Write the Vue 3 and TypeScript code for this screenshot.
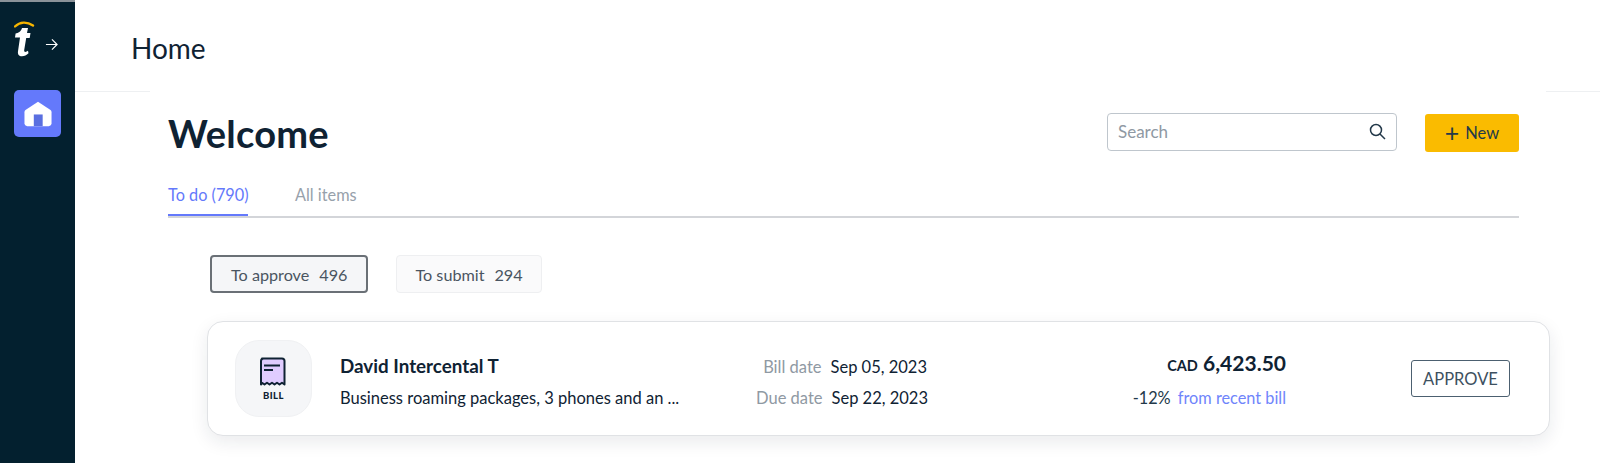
<template>
  <div class="page">
    <aside class="sidebar">
      <div class="brand">
        <svg class="logo" width="26" height="42" viewBox="0 0 26 42">
          <path d="M1 6.500C6 1.500 13 1.500 19 5.500" fill="none" stroke="#f7b500" stroke-width="2.400" stroke-linecap="round" />
          <path d="M8 8h6l-1 5h3.500l-.8 5h-3.500l-2 12c-.3 2 1 2.500 2.500 1.500l1.300-.8.5 2.500c-2 2-4 3-6.500 3-3 0-4.500-2-4-5l2-13.700H1l.6-4c2.400-.5 5.500-2 6.400-5.500z" fill="#fff" />
        </svg>
        <svg class="arrow" width="13" height="13" viewBox="0 0 14 14">
          <path d="M1 7h12M7.500 1.500 13 7l-5.500 5.500" fill="none" stroke="#fff" stroke-width="1.300" />
        </svg>
      </div>
      <div class="home-tile">
        <svg width="28" height="26" viewBox="0 0 30 26">
          <path d="M15 0 2 8.500C1 9.200.5 10 .5 11.200V23c0 1.700 1.300 3 3 3h23c1.700 0 3-1.300 3-3V11.200c0-1.200-.5-2-1.500-2.700z" fill="#fff" />
          <rect x="10.500" y="13.500" width="9.500" height="12.500" fill="#5a6fe0" />
        </svg>
      </div>
    </aside>

    <main class="main">
      <header class="topbar">Home</header>
      <section class="panel">
        <div class="title-row">
          <h1>Welcome</h1>
          <div class="actions">
            <label class="search">
              <input type="text" placeholder="Search" />
              <svg width="17" height="17" viewBox="0 0 17 17">
                <circle cx="7" cy="7" r="5.500" fill="none" stroke="#23394a" stroke-width="1.500" />
                <path d="m11 11 5 5" stroke="#23394a" stroke-width="1.500" />
              </svg>
            </label>
            <button class="new-btn" type="button"><span class="plus">+</span>New</button>
          </div>
        </div>

        <nav class="tabs">
          <a class="tab active">To do (790)</a>
          <a class="tab">All items</a>
        </nav>

        <div class="filters">
          <button class="chip selected" type="button">To approve<span>496</span></button>
          <button class="chip" type="button">To submit<span>294</span></button>
        </div>

        <article class="bill">
          <div class="bill-icon">
            <svg width="28" height="30" viewBox="0 0 28 30">
              <path d="M4 1.500h20c1.400 0 2.500 1.100 2.500 2.500v23.500l-2.500-1.800-2.500 1.800-2.500-1.800-2.500 1.800-2.500-1.800-2.500 1.800-2.500-1.800-2.500 1.800-2.500-1.800-1 1.800V4c0-1.400 1.100-2.500 2.500-2.500z" fill="#e0ccff" stroke="#0f2233" stroke-width="2" stroke-linejoin="round" />
              <path d="M6 8.500h16M6 13h9" stroke="#0f2233" stroke-width="2" />
            </svg>
            <span>BILL</span>
          </div>
          <div class="bill-text">
            <div class="vendor">David Intercental T</div>
            <div class="desc">Business roaming packages, 3 phones and an ...</div>
          </div>
          <div class="dates">
            <div class="date-row"><span class="date-label">Bill date</span><span>Sep 05, 2023</span></div>
            <div class="date-row"><span class="date-label">Due date</span><span>Sep 22, 2023</span></div>
          </div>
          <div class="amount">
            <div class="total"><small>CAD</small> 6,423.50</div>
            <div class="delta">-12% <a>from recent bill</a></div>
          </div>
          <button class="approve" type="button">APPROVE</button>
        </article>
      </section>
    </main>
  </div>
</template>

<script setup lang="ts">
</script>

<style>
html,
body {
  margin: 0;
  background: #fff;
  overflow: hidden;
}
</style>

<style scoped>
.page {
  display: flex;
  height: 463px;
  font-family: Lato, "Open Sans", sans-serif;
  color: #0f2233;
}

.sidebar {
  width: 75px;
  flex-shrink: 0;
  background: #03202f;
  border-top: 2px solid #8a9299;
  box-sizing: border-box;
  padding: 18px 14px 0;
}

.brand {
  display: flex;
  align-items: center;
  gap: 5px;
  height: 42px;
}

.arrow {
  margin-top: 6px;
}

.home-tile {
  width: 47px;
  height: 47px;
  margin-top: 28px;
  background: #6479fb;
  border-radius: 5px;
  display: flex;
  align-items: center;
  justify-content: center;
}

.main {
  flex: 1;
  min-width: 0;
}

.topbar {
  height: 92px;
  box-sizing: border-box;
  border-bottom: 1px solid #eef0f2;
  padding: 31px 0 0 56px;
  font-size: 28px;
  line-height: 35px;
}

.panel {
  margin: -1px 54px 0 75px;
  padding: 2px 0 0;
  background: #fff;
  position: relative;
}

.title-row {
  display: flex;
  justify-content: space-between;
  align-items: center;
  margin: 0 27px 0 18px;
  height: 80px;
}

h1 {
  margin: 0;
  font-size: 38px;
  font-weight: 700;
  letter-spacing: 0.2px;
}

.actions {
  display: flex;
  align-items: center;
  gap: 28px;
}

.search {
  display: flex;
  align-items: center;
  width: 290px;
  height: 38px;
  margin-bottom: 3px;
  box-sizing: border-box;
  border: 1px solid #bfc6cd;
  border-radius: 4px;
  padding: 0 10px;
}

.search input {
  flex: 1;
  min-width: 0;
  border: 0;
  outline: 0;
  padding: 0;
  font: 17px Lato, sans-serif;
}

.search input::placeholder {
  color: #8f99a3;
}

.new-btn {
  display: flex;
  align-items: center;
  justify-content: center;
  gap: 6px;
  width: 94px;
  height: 38px;
  border: 0;
  border-radius: 3px;
  background: #fabb00;
  color: #23394a;
  font: 16.500px Lato, sans-serif;
}

.plus {
  font-size: 25px;
  line-height: 16px;
  margin-top: -3px;
}

.tabs {
  display: flex;
  gap: 47px;
  margin: 0 27px 0 18px;
  height: 43px;
  border-bottom: 2px solid #d3d5d9;
  font-size: 16.300px;
  white-space: nowrap;
}

.tab {
  height: 43px;
  box-sizing: border-box;
  padding-top: 12px;
  color: #97a1ab;
}

.tab.active {
  width: 80px;
  color: #6479fb;
  border-bottom: 2px solid #6479fb;
}

.filters {
  display: flex;
  gap: 28px;
  margin: 37px 0 0 60px;
}

.chip {
  height: 38px;
  padding: 0 18px;
  box-sizing: border-box;
  border: 1px solid #eeeff1;
  border-radius: 4px;
  background: #fafafb;
  color: #4a5561;
  font: 16.200px Lato, sans-serif;
}

.chip.selected {
  padding: 0 19px;
  border: 2px solid #6a7076;
  background: #f5f6f8;
}

.chip span {
  margin-left: 10px;
}

.bill {
  display: flex;
  align-items: center;
  margin: 28px 0 0 57px;
  width: 1343px;
  height: 115px;
  box-sizing: border-box;
  background: #fff;
  border: 1px solid #e0e2e5;
  border-radius: 16px;
  box-shadow: 0 6px 18px rgba(20, 30, 50, 0.09);
  padding: 0 39px 0 27px;
}

.bill-icon {
  width: 77px;
  height: 77px;
  flex-shrink: 0;
  border-radius: 24px;
  background: #f5f6f8;
  border: 1px solid #f0f1f3;
  box-sizing: border-box;
  display: flex;
  flex-direction: column;
  align-items: center;
  justify-content: center;
  gap: 3px;
}

.bill-icon svg {
  margin-left: -4px;
}

.bill-icon span {
  font-size: 9.500px;
  font-weight: 900;
  letter-spacing: 0.5px;
}

.bill-text {
  width: 410px;
  margin-left: 28px;
  padding-top: 5px;
}

.vendor {
  font-size: 18.800px;
  font-weight: 700;
  margin-bottom: 11px;
}

.desc {
  font-size: 16.500px;
  white-space: nowrap;
}

.dates {
  width: 177px;
  padding-top: 8px;
  font-size: 16.500px;
  display: flex;
  flex-direction: column;
  gap: 11px;
}

.date-row {
  display: flex;
  justify-content: flex-end;
  gap: 9px;
  white-space: nowrap;
}

.date-row + .date-row {
  margin-right: -1px;
}

.date-label {
  color: #8f99a3;
}

.amount {
  flex: 1;
  text-align: right;
  padding-right: 125px;
}

.total {
  font-size: 21px;
  font-weight: 700;
  margin-bottom: 13px;
  white-space: nowrap;
}

.total small {
  font-size: 14.500px;
  font-weight: 700;
}

.delta {
  font-size: 16.300px;
  color: #23394a;
  white-space: nowrap;
}

.delta a {
  color: #6f85fb;
  margin-left: 3px;
}

.approve {
  width: 99px;
  height: 37px;
  flex-shrink: 0;
  background: #fff;
  border: 1px solid #4c6070;
  border-radius: 3px;
  color: #3d5060;
  font: 16.500px Lato, sans-serif;
}
</style>
